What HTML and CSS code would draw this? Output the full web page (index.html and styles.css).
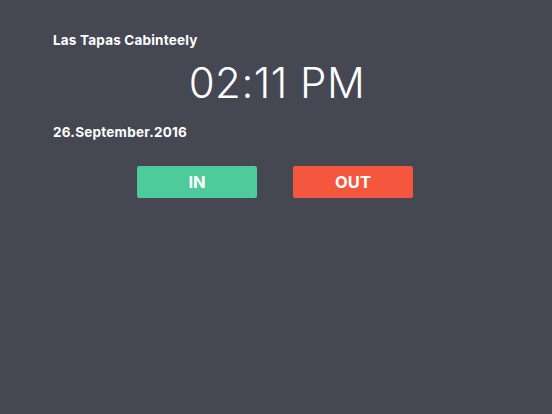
FILE: index.html
```html
<!DOCTYPE html>
<html>
<head>
<meta charset="utf-8">
<link rel="stylesheet" href="styles.css">
</head>
<body>
<main class="screen">
  <div class="venue">Las Tapas Cabinteely</div>
  <div class="clock">02:11 PM</div>
  <div class="date">26.September.2016</div>
  <div class="actions">
    <button class="btn btn-in">IN</button>
    <button class="btn btn-out">OUT</button>
  </div>
</main>
</body>
</html>
```

FILE: styles.css
```css
html, body {
  margin: 0;
  padding: 0;
  height: 100%;
}
body {
  background: #454753;
  font-family: Inter, "Noto Sans", sans-serif;
  color: #ffffff;
}
.screen {
  display: flex;
  flex-direction: column;
  padding: 32px 53px 0;
}
.venue {
  font-size: 13.5px;
  line-height: 16px;
  font-weight: 700;
  letter-spacing: 0.2px;
}
.clock {
  margin-top: 10px;
  align-self: center;
  padding-left: 2px;
  font-size: 42px;
  line-height: 50px;
  font-weight: 300;
  letter-spacing: 0.5px;
}
.date {
  margin-top: 16px;
  font-size: 13.5px;
  line-height: 16px;
  font-weight: 700;
  letter-spacing: 0.25px;
}
.actions {
  display: flex;
  justify-content: center;
  gap: 36px;
  margin-top: 26px;
  margin-left: -53px;
  margin-right: -51px;
}
.btn {
  width: 120px;
  height: 32px;
  border: 0;
  border-radius: 2px;
  color: #ffffff;
  font-family: Inter, "Noto Sans", sans-serif;
  font-size: 16.5px;
  font-weight: 700;
  padding: 0;
}
.btn-in {
  background: #4ecb9b;
}
.btn-out {
  background: #f4573d;
}
```
